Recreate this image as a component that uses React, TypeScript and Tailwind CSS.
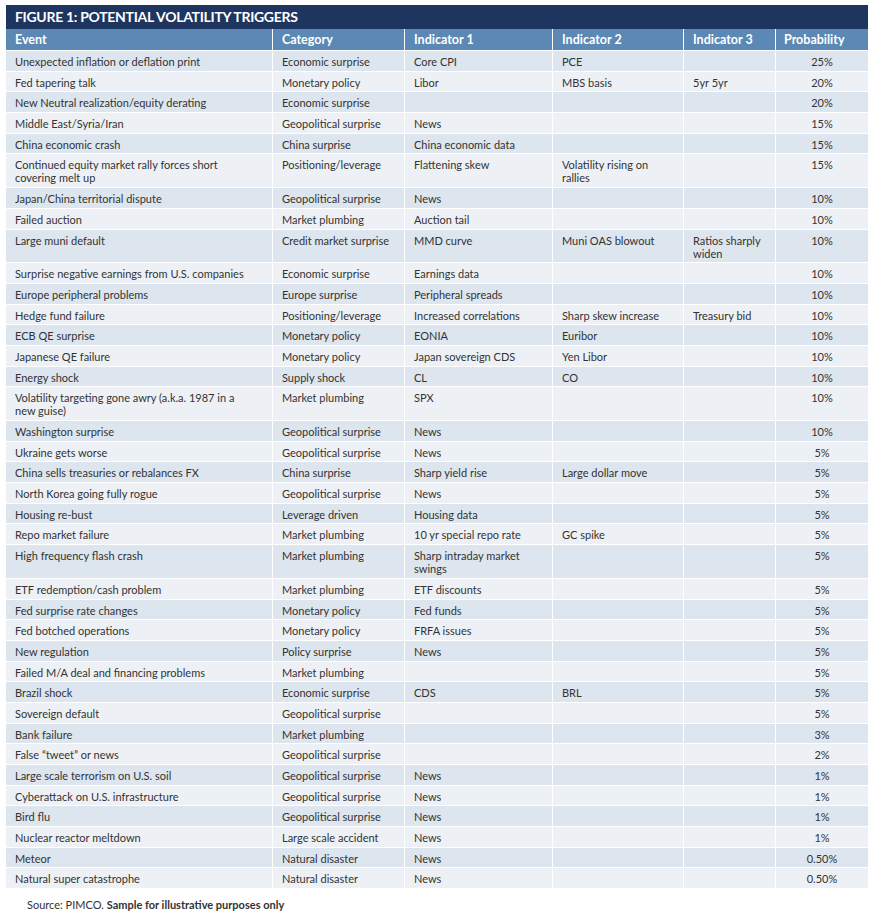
import React from "react";

type Row = [string, string, string, string, string, string];

const rows: Row[] = [
  ["Unexpected inflation or deflation print", "Economic surprise", "Core CPI", "PCE", "", "25%"],
  ["Fed tapering talk", "Monetary policy", "Libor", "MBS basis", "5yr 5yr", "20%"],
  ["New Neutral realization/equity derating", "Economic surprise", "", "", "", "20%"],
  ["Middle East/Syria/Iran", "Geopolitical surprise", "News", "", "", "15%"],
  ["China economic crash", "China surprise", "China economic data", "", "", "15%"],
  ["Continued equity market rally forces short\ncovering melt up", "Positioning/leverage", "Flattening skew", "Volatility rising on\nrallies", "", "15%"],
  ["Japan/China territorial dispute", "Geopolitical surprise", "News", "", "", "10%"],
  ["Failed auction", "Market plumbing", "Auction tail", "", "", "10%"],
  ["Large muni default", "Credit market surprise", "MMD curve", "Muni OAS blowout", "Ratios sharply\nwiden", "10%"],
  ["Surprise negative earnings from U.S. companies", "Economic surprise", "Earnings data", "", "", "10%"],
  ["Europe peripheral problems", "Europe surprise", "Peripheral spreads", "", "", "10%"],
  ["Hedge fund failure", "Positioning/leverage", "Increased correlations", "Sharp skew increase", "Treasury bid", "10%"],
  ["ECB QE surprise", "Monetary policy", "EONIA", "Euribor", "", "10%"],
  ["Japanese QE failure", "Monetary policy", "Japan sovereign CDS", "Yen Libor", "", "10%"],
  ["Energy shock", "Supply shock", "CL", "CO", "", "10%"],
  ["Volatility targeting gone awry (a.k.a. 1987 in a\nnew guise)", "Market plumbing", "SPX", "", "", "10%"],
  ["Washington surprise", "Geopolitical surprise", "News", "", "", "10%"],
  ["Ukraine gets worse", "Geopolitical surprise", "News", "", "", "5%"],
  ["China sells treasuries or rebalances FX", "China surprise", "Sharp yield rise", "Large dollar move", "", "5%"],
  ["North Korea going fully rogue", "Geopolitical surprise", "News", "", "", "5%"],
  ["Housing re-bust", "Leverage driven", "Housing data", "", "", "5%"],
  ["Repo market failure", "Market plumbing", "10 yr special repo rate", "GC spike", "", "5%"],
  ["High frequency flash crash", "Market plumbing", "Sharp intraday market\nswings", "", "", "5%"],
  ["ETF redemption/cash problem", "Market plumbing", "ETF discounts", "", "", "5%"],
  ["Fed surprise rate changes", "Monetary policy", "Fed funds", "", "", "5%"],
  ["Fed botched operations", "Monetary policy", "FRFA issues", "", "", "5%"],
  ["New regulation", "Policy surprise", "News", "", "", "5%"],
  ["Failed M/A deal and financing problems", "Market plumbing", "", "", "", "5%"],
  ["Brazil shock", "Economic surprise", "CDS", "BRL", "", "5%"],
  ["Sovereign default", "Geopolitical surprise", "", "", "", "5%"],
  ["Bank failure", "Market plumbing", "", "", "", "3%"],
  ["False \u201ctweet\u201d or news", "Geopolitical surprise", "", "", "", "2%"],
  ["Large scale terrorism on U.S. soil", "Geopolitical surprise", "News", "", "", "1%"],
  ["Cyberattack on U.S. infrastructure", "Geopolitical surprise", "News", "", "", "1%"],
  ["Bird flu", "Geopolitical surprise", "News", "", "", "1%"],
  ["Nuclear reactor meltdown", "Large scale accident", "News", "", "", "1%"],
  ["Meteor", "Natural disaster", "News", "", "", "0.50%"],
  ["Natural super catastrophe", "Natural disaster", "News", "", "", "0.50%"],
];

const headers = ["Event", "Category", "Indicator 1", "Indicator 2", "Indicator 3", "Probability"];

export default function App() {
  return (
    <div
      className="w-[870px] h-[916px] bg-white text-[#333333]"
      style={{ fontFamily: "Lato, 'Liberation Sans', sans-serif" }}
    >
      <div className="pt-[5px] pl-[6px]">
        <div className="w-[862px]">
          <div className="h-[24px] bg-[#1e3560] text-white font-bold text-[14px] leading-[24px] pl-[9px] tracking-[-0.3px]">
            FIGURE 1: POTENTIAL VOLATILITY TRIGGERS
          </div>
          <div className="grid grid-cols-[266px_131px_147px_130px_91px_92px] gap-x-px gap-y-px bg-white">
            {headers.map((h, i) => (
              <div
                key={h}
                className={`bg-[#5b88b5] text-white font-bold text-[12.5px] h-[21px] leading-[21px] ${
                  i === 5 ? "pl-[8px]" : "pl-[9px]"
                }`}
              >
                {h}
              </div>
            ))}
            {rows.map((r, ri) =>
              r.map((c, ci) => (
                <div
                  key={`${ri}-${ci}`}
                  className={`${ri % 2 === 0 ? "bg-[#dde5ee]" : "bg-[#edf1f6]"} text-[11px] leading-[13px] pt-[4px] pb-[2.7px] whitespace-pre-line ${
                    ci === 5 ? "text-center" : "pl-[9px]"
                  }`}
                >
                  {c}
                </div>
              ))
            )}
          </div>
        </div>
        <div className="pl-[21px] pt-[10px] text-[11px] leading-[13px]">
          Source: PIMCO. <span className="font-bold">Sample for illustrative purposes only</span>
        </div>
      </div>
    </div>
  );
}
